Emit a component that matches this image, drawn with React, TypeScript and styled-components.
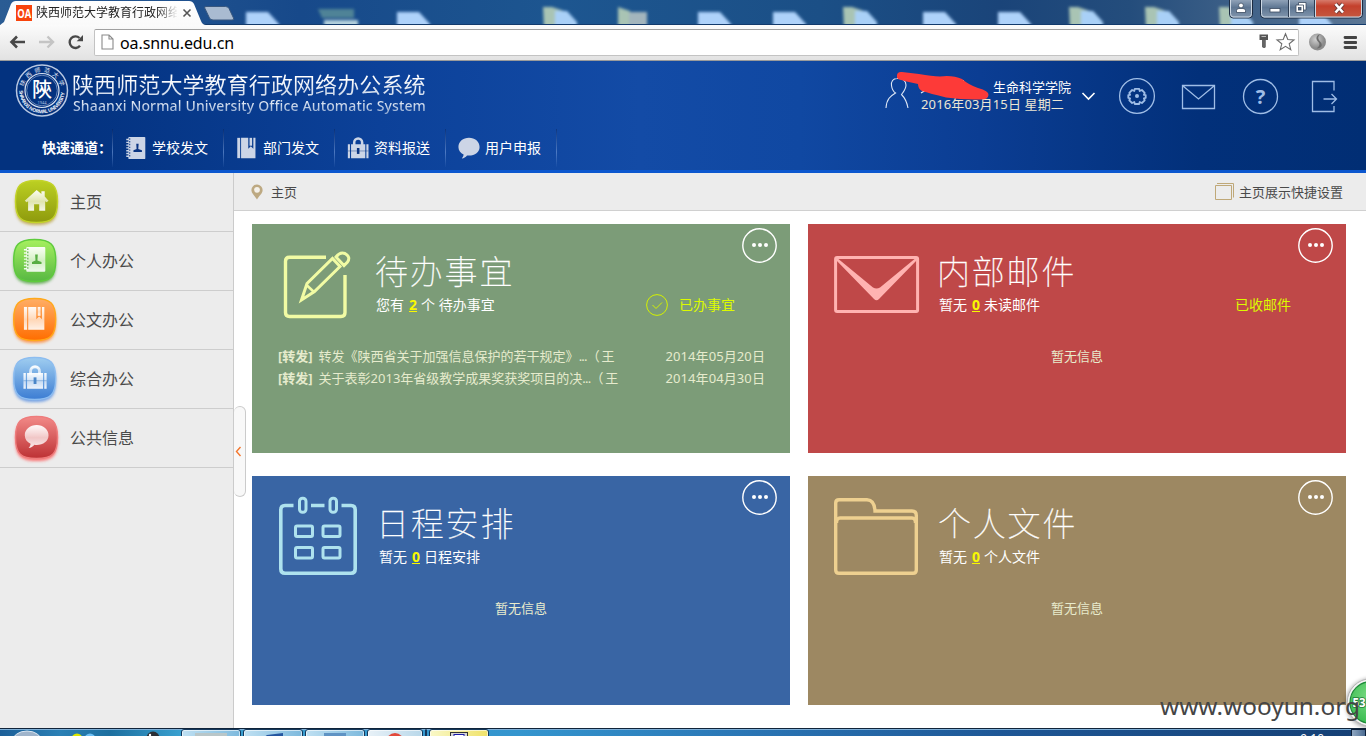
import React from "react";
import styled, { createGlobalStyle } from "styled-components";

const Global = createGlobalStyle`
  * { box-sizing: border-box; }
  body { margin: 0; overflow: hidden; background: #fff; }
  body, button { font-family: "Noto Sans", "Noto Sans CJK SC", sans-serif; }
  svg { display: block; flex: none; }
`;

const Screen = styled.div`
  position: relative;
  display: flex;
  flex-direction: column;
  width: 1366px;
  height: 736px;
  overflow: hidden;
`;

/* ---------- browser chrome ---------- */

const TabStrip = styled.div`
  position: relative;
  height: 25px;
  flex: none;
  background: linear-gradient(90deg, #2a5c94 0, #17498a 300px, #1d5690 560px, #1b4f86 820px, #1a4479 1000px, #244d7c 1130px, #5c7795 1366px);
`;

const Wallpaper = styled.svg`
  position: absolute;
  left: 0;
  top: 0;
`;

const TabLabel = styled.div`
  position: absolute;
  left: 36px;
  top: 3px;
  width: 141px;
  overflow: hidden;
  white-space: nowrap;
  font-size: 12px;
  line-height: 20px;
  color: #222;
  -webkit-mask-image: linear-gradient(90deg, #000 120px, transparent 142px);
  mask-image: linear-gradient(90deg, #000 120px, transparent 142px);
`;

const Toolbar = styled.div`
  display: flex;
  align-items: center;
  height: 36px;
  flex: none;
  padding: 0 9px 1px 7px;
  background: linear-gradient(#fbfbfb, #e2e2e2);
  border-bottom: 1px solid #9b9b9b;
`;

const AddressBar = styled.div`
  display: flex;
  align-items: center;
  width: 1206px;
  height: 27px;
  margin: 0 9px 0 10px;
  padding: 0 2px 0 6px;
  border: 1px solid #c3c3c3;
  border-top-color: #a0a0a0;
  border-radius: 2px;
  background: #fff;
`;

const Url = styled.span`
  flex: 1;
  margin-left: 6px;
  padding-top: 2px;
  font-size: 16px;
  line-height: 20px;
  letter-spacing: -0.08px;
  color: #000;
`;

/* ---------- site header ---------- */

const Header = styled.header`
  display: flex;
  flex-direction: column;
  height: 112px;
  flex: none;
  border-bottom: 3px solid #0b57cf;
  background: linear-gradient(90deg, #03327f 0, #03327f 60px, #0c4199 380px, #134ba6 640px, #1048a2 800px, #0b3d93 980px, #02307a 1200px, #012e74 1366px);
`;

const HeaderTop = styled.div`
  display: flex;
  align-items: flex-start;
  height: 67px;
  padding-left: 15px;
`;

const SiteName = styled.div`
  width: 374px;
  flex: none;
  margin-left: 3px;
  padding-top: 10px;
  white-space: nowrap;
`;

const SiteNameCn = styled.div`
  font-size: 22px;
  line-height: 26px;
  letter-spacing: 0.1px;
  background: linear-gradient(#fff 30%, #c9d6ea);
  background-clip: text;
  -webkit-background-clip: text;
  color: transparent;
`;

const SiteNameEn = styled.div`
  padding-left: 1px;
  font-family: "Noto Sans", sans-serif;
  font-size: 14px;
  font-weight: 500;
  line-height: 18px;
  letter-spacing: 0.14px;
  background: linear-gradient(#e0e8f4 30%, #7f9cc9);
  background-clip: text;
  -webkit-background-clip: text;
  color: transparent;
`;

const UserTools = styled.div`
  position: relative;
  display: flex;
  flex: none;
  margin-left: 439px;
`;

const UserText = styled.div`
  width: 157px;
  margin-left: 11px;
  padding-top: 18px;
  white-space: nowrap;
  font-size: 13px;
  line-height: 17px;
  color: #fff;
`;

const Department = styled.div`
  padding-left: 72px;
`;

const DateText = styled.div`
  color: #ece6d4;
  letter-spacing: 0.14px;
`;

const Scribble = styled.svg`
  position: absolute;
  left: 5px;
  top: 8px;
`;

const QuickNav = styled.nav`
  display: flex;
  align-items: center;
  height: 42px;
  padding: 0 0 3px 42px;
  font-size: 14px;
  line-height: 20px;
  color: #fff;
`;

const QuickLabel = styled.span`
  width: 70px;
  white-space: nowrap;
  font-weight: 700;
  word-spacing: -1px;
`;

const QuickItem = styled.div`
  display: flex;
  align-items: center;
  width: 111px;
  height: 38px;
  padding-left: 12px;
  gap: 5px;
  border-left: 1px solid;
  border-image: linear-gradient(rgba(0, 20, 70, 0.4), rgba(110, 150, 215, 0.65) 60%, rgba(110, 150, 215, 0)) 1;
`;

const QuickEnd = styled(QuickItem)`
  width: 1px;
  padding: 0;
`;

/* ---------- body ---------- */

const Body = styled.div`
  display: flex;
  flex: 1;
  min-height: 0;
`;

const Sidebar = styled.aside`
  width: 234px;
  background: #ececec;
  border-right: 1px solid #cbcbcb;
`;

const MenuRow = styled.div`
  display: flex;
  align-items: center;
  height: 59px;
  border-bottom: 1px solid #cdcdcd;
  font-size: 16px;
  line-height: 24px;
  color: #4a4a4a;
`;

const MenuIcon = styled.svg`
  margin-right: 6px;
`;

const Main = styled.main`
  position: relative;
  flex: 1;
  background: #fff;
`;

const Crumbs = styled.div`
  display: flex;
  align-items: center;
  height: 38px;
  padding: 0 23px 0 17px;
  background: #ececec;
  border-bottom: 1px solid #d0d0d0;
  font-size: 13px;
  line-height: 20px;
  color: #4a4a4a;
`;

const CrumbName = styled.span`
  flex: 1;
  margin-left: 8px;
`;

const SettingText = styled.span`
  margin-left: 5px;
`;

const CollapseHandle = styled.div`
  position: absolute;
  left: 0;
  top: 233px;
  display: flex;
  align-items: center;
  padding-left: 1px;
  width: 12px;
  height: 91px;
  border: 1px solid #cbcbcb;
  border-left: 0;
  border-radius: 6px;
  background: #f8f8f8;
`;

const CardGrid = styled.div`
  display: grid;
  grid-template-columns: 538px 538px;
  grid-auto-rows: 229px;
  gap: 23px 18px;
  padding: 13px 0 0 18px;
`;

const Card = styled.section<{ $bg: string }>`
  position: relative;
  background: ${(p) => p.$bg};
`;

const CardHead = styled.div`
  display: flex;
  height: 121px;
`;

const CardTitles = styled.div<{ $shift: number }>`
  flex: 1;
  padding: 24px 55px 0 ${(p) => p.$shift}px;
  white-space: nowrap;
`;

const CardTitle = styled.h2<{ $indent: number }>`
  margin: 0 0 2px;
  text-indent: ${(p) => p.$indent}px;
  font-family: "Noto Sans CJK SC", sans-serif;
  font-size: 33px;
  font-weight: 100;
  line-height: 44px;
  letter-spacing: 1.8px;
  color: #fff;
  -webkit-text-stroke: 0.3px #fff;
`;

const CardSub = styled.div`
  display: flex;
  align-items: center;
  height: 22px;
  font-size: 14px;
  line-height: 22px;
  color: #fff;
`;

const Count = styled.b`
  margin: 0 4px 0 5px;
  color: #f8f800;
  text-decoration: underline;
`;

const CardLink = styled.div`
  display: flex;
  align-items: center;
  gap: 11px;
  margin-left: auto;
  color: #dcfa00;
`;

const MoreButton = styled.div`
  position: absolute;
  right: 13px;
  top: 4px;
`;

const ItemList = styled.div`
  font-size: 13px;
  line-height: 22px;
  color: #e6ebcd;
  padding: 0 25px 0 26px;
`;

const Item = styled.div`
  display: flex;
  justify-content: space-between;
  white-space: nowrap;
`;

const Tag = styled.b`
  margin-right: 6px;
`;

const Sender = styled.span`
  letter-spacing: -0.8px;
`;

const DateCell = styled.span`
  letter-spacing: 0.1px;
`;

const Empty = styled.div`
  text-align: center;
  font-size: 13px;
  line-height: 22px;
  color: #e8ebcd;
`;

/* ---------- desktop overlays and taskbar ---------- */

const Watermark = styled.div`
  position: absolute;
  left: 1160px;
  top: 689px;
  font-family: "Noto Sans", sans-serif;
  font-size: 24.4px;
  line-height: 34px;
  color: #454545;
  white-space: nowrap;
`;

const SpeedBall = styled.svg`
  position: absolute;
  left: 1336px;
  top: 672px;
`;

const Taskbar = styled.div`
  display: flex;
  height: 8px;
  flex: none;
  overflow: hidden;
  border-top: 1px solid #10243a;
  box-shadow: inset 0 1px 0 #7fb0d8;
  background: linear-gradient(90deg, #1c5f98 0, #2b80b5 60px, #1d6f9f 110px, #39a0cf 180px, #3495ce 520px, #2a75b4 750px, #1e5796 1000px, #153f74 1366px);
`;

const TaskStart = styled.div`
  width: 181px;
  flex: none;
`;

const TaskButton = styled.div<{ $w: number; $bg: string }>`
  display: flex;
  justify-content: center;
  width: ${(p) => p.$w}px;
  height: 12px;
  flex: none;
  margin-right: 2px;
  border: 1px solid #14385c;
  border-radius: 3px;
  box-shadow: inset 0 0 0 1px rgba(255, 255, 255, 0.6);
  background: ${(p) => p.$bg};
`;

const Clock = styled.div`
  margin: 4px 27px 0 auto;
  font-size: 12px;
  line-height: 12px;
  color: #fff;
`;

const ShowDesktop = styled.div`
  width: 15px;
  height: 12px;
  border: 1px solid #0b1f3a;
  background: linear-gradient(90deg, #8fa7c2, #4c6c92);
`;

type GlyphKind = "home" | "book" | "mark" | "case" | "chat";

/* Symbols are drawn on a 26 x 26 field */
function Glyph({ kind, fill, dark }: { kind: GlyphKind; fill: string; dark: string }) {
  switch (kind) {
    case "home":
      return (
        <path
          fill={fill}
          d="M13 2 L18 6.2 V3.5 H21.5 V9 L25.5 13.4 L23.5 15 L22 14 V24 H15.7 V17 H10.3 V24 H4 V14 L2.5 15 L0.5 13.4 Z"
        />
      );
    case "book":
      return (
        <g>
          <rect x="4" y="0" width="20" height="26" rx="1" fill={fill} />
          <path d="M1.500 3h4M1.500 6.300h4M1.500 9.600h4M1.500 12.900h4M1.500 16.200h4M1.500 19.500h4M1.500 22.800h4" stroke={fill} strokeWidth="1.6" />
          <path d="M5.600 1.500v23" stroke={dark} strokeWidth="1.2" strokeDasharray="1.65 1.65" />
          <path d="M13.300 8h2.800l-.4 6.300 4.300 1.400V17.800h-10v-2.100l3.700-1.400z" fill={dark} />
        </g>
      );
    case "mark":
      return (
        <g fill={fill}>
          <rect x="1.500" y="1" width="3.4" height="24" />
          <path d="M6 1h8.500v13l3-3 3 3V1H23v24H6z" />
          <rect x="16" y="1" width="3" height="9.3" />
        </g>
      );
    case "case":
      return (
        <g>
          <path d="M8.500 10V6.500a4.700 4.700 0 0 1 9.400 0v3.500" fill="none" stroke={fill} strokeWidth="3" />
          <path d="M1 8.500H3.500V25H1zM4.800 8.500h16.800V25H4.800zM22.900 8.500h2.500V25h-2.500z" fill={fill} />
          <path d="M1 16.500h24.500" stroke={dark} strokeWidth=".9" opacity=".55" />
          <rect x="11.700" y="13" width="3" height="7" fill={dark} />
        </g>
      );
    default:
      return (
        <path
          fill={fill}
          d="M13 1C20 1 25.500 5.500 25.500 11.800S20 22 13 22c-1 0-1.600 0-2.300-.2C9 23.800 7 25 4.500 25.300c1-1 2-2.500 2.100-4.500C3 19 .5 16 .5 11.800.5 5.500 6 1 13 1z"
        />
      );
  }
}

const quickLinks: { kind: GlyphKind; text: string }[] = [
  { kind: "book", text: "学校发文" },
  { kind: "mark", text: "部门发文" },
  { kind: "case", text: "资料报送" },
  { kind: "chat", text: "用户申报" },
];

const menu: { kind: GlyphKind; text: string; x: number; top: string; bottom: string; edge: string; dark: string; glow: string }[] = [
  { kind: "home", text: "主页", x: 15.5, top: "#bcd022", bottom: "#8e9a0d", edge: "#c3d32a", dark: "#8e9a0d", glow: "#b59a2a" },
  { kind: "book", text: "个人办公", x: 13.7, top: "#a6f05f", bottom: "#57b842", edge: "#5ecb3c", dark: "#57ad42", glow: "#3f9d2c" },
  { kind: "mark", text: "公文办公", x: 13.7, top: "#ffae66", bottom: "#ff6d00", edge: "#ffa91a", dark: "#e8761c", glow: "#ff7b1c" },
  { kind: "case", text: "综合办公", x: 13.7, top: "#9fcdf0", bottom: "#3c7dd3", edge: "#8dbdf0", dark: "#4a86c8", glow: "#4a86e0" },
  { kind: "chat", text: "公共信息", x: 15.5, top: "#f28a88", bottom: "#bd3134", edge: "#ee7c7c", dark: "#bd3134", glow: "#ff4b4b" },
];

function MenuBadge({ item }: { item: (typeof menu)[number] }) {
  const { kind, x } = item;
  const body = "M21 0 C37 0 42 5 42 21 S37 42 21 42 0 37 0 21 5 0 21 0Z";
  return (
    <MenuIcon width="64" height="58" viewBox="0 0 64 58">
      <defs>
        <linearGradient id={`bg-${kind}`} x2="0" y2="1">
          <stop offset="0" stopColor={item.top} />
          <stop offset="1" stopColor={item.bottom} />
        </linearGradient>
        <linearGradient id={`fg-${kind}`} x2="0" y2="1">
          <stop offset="0" stopColor="#fff" stopOpacity=".95" />
          <stop offset=".55" stopColor="#fff" stopOpacity=".65" />
          <stop offset="1" stopColor="#fff" stopOpacity=".9" />
        </linearGradient>
        <filter id={`sh-${kind}`} x="-20%" y="-20%" width="140%" height="150%">
          <feGaussianBlur stdDeviation="1.7" />
        </filter>
      </defs>
      <path d={body} transform={`translate(${x} 10)`} fill={item.glow} opacity=".75" filter={`url(#sh-${kind})`} />
      <path d={body} transform={`translate(${x} 7.500)`} fill={`url(#bg-${kind})`} stroke={item.edge} strokeWidth="1.4" />
      <g transform={`translate(${x + 8.8} 15) scale(.95)`}>
        <Glyph kind={kind} fill={`url(#fg-${kind})`} dark={item.dark} />
      </g>
    </MenuIcon>
  );
}

const wallpaperIcons: { x: number; kind: "doc" | "sheet" | "device" }[] = [
  { x: 245, kind: "doc" },
  { x: 318, kind: "device" },
  { x: 396, kind: "doc" },
  { x: 543, kind: "sheet" },
  { x: 618, kind: "device" },
  { x: 697, kind: "doc" },
  { x: 772, kind: "doc" },
  { x: 843, kind: "sheet" },
  { x: 922, kind: "doc" },
  { x: 997, kind: "doc" },
  { x: 1069, kind: "sheet" },
  { x: 1145, kind: "sheet" },
  { x: 1219, kind: "sheet" },
  { x: 1298, kind: "doc" },
];

function WindowStrip() {
  return (
    <TabStrip>
      <Wallpaper width="1366" height="25" viewBox="0 0 1366 25">
        <defs>
          <filter id="soft" x="-20%" y="-20%" width="140%" height="140%">
            <feGaussianBlur stdDeviation="1.8" />
          </filter>
          <linearGradient id="btn" x2="0" y2="1">
            <stop offset="0" stopColor="#a3b3c6" />
            <stop offset=".5" stopColor="#5f7793" />
            <stop offset="1" stopColor="#8296ad" />
          </linearGradient>
          <linearGradient id="close" x2="0" y2="1">
            <stop offset="0" stopColor="#e0988a" />
            <stop offset=".45" stopColor="#c4402c" />
            <stop offset="1" stopColor="#c4573f" />
          </linearGradient>
          <linearGradient id="tab" x2="0" y2="1">
            <stop offset="0" stopColor="#fff" />
            <stop offset="1" stopColor="#fafafa" />
          </linearGradient>
        </defs>
        <g filter="url(#soft)">
          {wallpaperIcons.map(({ x, kind }) =>
            kind === "doc" ? (
              <path key={x} d={`M${x + 1} 12h22l11 12v4H${x + 1}z`} fill="#aed2fa" />
            ) : kind === "sheet" ? (
              <g key={x}>
                <path d={`M${x} 7h9l12 4v18H${x + 1}z`} fill="#a9c4b4" />
                <path d={`M${x + 12} 11h12l10 11v7H${x + 12}z`} fill="#a9d0f7" />
              </g>
            ) : x < 500 ? (
              <g key={x}>
                <path d={`M${x} 9h36v9H${x + 4}z`} fill="#4f8397" />
                <path d={`M${x + 6} 20h34v9H${x + 6}z`} fill="#b3d0dc" />
              </g>
            ) : (
              <g key={x}>
                <path d={`M${x} 7l12 4v18H${x}z`} fill="#a9c4b4" />
                <path d={`M${x + 11} 12h18v17H${x + 11}z`} fill="#a3b5bd" />
              </g>
            ),
          )}
        </g>
        <path d="M0 24.500h1366" stroke="#123a6c" />
        <path d="M0 25 L4 22 11 4Q12.500 1 16 1H189Q192.500 1 194 4L201 21Q202.500 25 206 25Z" fill="url(#tab)" />
        <path d="M206 6.500Q204 6.500 204.700 8L209.500 18Q210.500 20 213 20H232Q234.500 20 233.500 18L229 8.500Q228 6.500 225.500 6.500Z" fill="#a9bbd1" stroke="#38577e" strokeWidth="1" />
        <rect x="16" y="5" width="16" height="16" fill="#f8440c" />
        <text x="17.200" y="17.600" fill="#fff" fontSize="12.500" fontWeight="700" fontFamily="Open Sans, sans-serif" textLength="14" lengthAdjust="spacingAndGlyphs">OA</text>
        <path d="M183.500 9.500l7 7m0-7l-7 7" stroke="#555" strokeWidth="1.600" />
        <path d="M1229.500 -3V14Q1229.500 18 1233 18H1249Q1252.500 18 1252.500 14V-3Z" fill="url(#btn)" stroke="#1c2c42" />
        <path d="M1230.500 -3V13.500Q1230.500 17 1233 17H1249Q1251.500 17 1251.500 13.500V-3" fill="none" stroke="#cdd8e4" />
        <path d="M1260.500 -3V14Q1260.500 18 1264 18H1359Q1362.500 18 1362.500 14V-3Z" fill="url(#btn)" stroke="#1c2c42" />
        <path d="M1315 -3H1361.500V13.500Q1361.500 17 1359 17H1315Z" fill="url(#close)" />
        <path d="M1261.500 -3V13.500Q1261.500 17 1264 17H1359Q1361.500 17 1361.500 13.500V-3M1289.500 0V17M1315.500 0V17" fill="none" stroke="#cdd8e4" />
        <path d="M1288.500 0V17M1314.500 0V17" stroke="#2c3c52" />
        <g fill="#fff" stroke="#3a4a60" strokeWidth=".8">
          <circle cx="1241" cy="5.500" r="2.400" />
          <path d="M1236.500 12.500V10.500Q1236.500 8.500 1239 8.500H1243Q1245.500 8.500 1245.500 10.500V12.500Z" />
          <rect x="1270" y="8.500" width="10" height="3.500" />
          <path d="M1298.500 2.500H1306V10H1298.500Z" />
          <path d="M1296 5H1303.500V12.500H1296Z" />
          <rect x="1298.500" y="7.500" width="2.500" height="2.500" fill="#4d6582" />
        </g>
        <path d="M1335.500 4l7.500 8.500m0-8.500l-7.500 8.500" stroke="#6e3a36" strokeWidth="4.200" />
        <path d="M1335.500 4l7.500 8.500m0-8.500l-7.500 8.500" stroke="#fff" strokeWidth="2.600" />
      </Wallpaper>
      <TabLabel>陕西师范大学教育行政网络</TabLabel>
    </TabStrip>
  );
}

function BrowserToolbar() {
  return (
    <Toolbar>
      <svg width="77" height="26" viewBox="7 29.500 77 26">
        <path d="M25 42.500H12M17 37L11.500 42.500 17 48" fill="none" stroke="#484848" strokeWidth="2.600" />
        <path d="M39 42.500H52M47.500 37L53 42.500 47.500 48" fill="none" stroke="#c4c4c4" strokeWidth="2.400" />
        <path d="M80 46.300A5.800 5.800 0 1 1 79.500 38.500" fill="none" stroke="#484848" strokeWidth="2.400" />
        <path d="M83 35.500V41.800H76.700Z" fill="#484848" />
      </svg>
      <AddressBar>
        <svg width="13" height="16" viewBox="0 0 13 16">
          <path d="M1 1H8L12 5V15H1ZM8 1V5H12" fill="#fff" stroke="#8a8a8a" strokeWidth="1.100" />
        </svg>
        <Url>oa.snnu.edu.cn</Url>
        <svg width="38" height="20" viewBox="0 0 38 20">
          <path d="M1.500 2.500h8.500v5.500H1.500z" fill="#555" />
          <path d="M3.500 4.500h4.500" stroke="#bbb" />
          <path d="M4 8h3.800v7l-1 1H5.500l-1.500-1z" fill="#666" />
          <path d="M27.500 1.800l2.300 5.700 6.200.4-4.800 3.900 1.600 6-5.300-3.400-5.300 3.400 1.600-6L19 7.900l6.200-.4z" fill="#fff" stroke="#6c6c6c" strokeWidth="1.100" />
        </svg>
      </AddressBar>
      <svg width="49" height="22" viewBox="0 0 49 22">
        <defs>
          <radialGradient id="globe" cx=".4" cy=".35">
            <stop offset="0" stopColor="#cfcfcf" />
            <stop offset="1" stopColor="#8c8c8c" />
          </radialGradient>
        </defs>
        <circle cx="9.500" cy="11" r="8.500" fill="url(#globe)" />
        <path d="M12 3C8 4.500 7.500 8 10 10.500s1.500 5-1.500 7c5.500-.5 6.500-3.500 4-6.500s-3-4.500-.5-8z" fill="#6c6c6c" />
        <path d="M37 6.500h11M37 11.500h11M37 16.500h11" stroke="#444" strokeWidth="2.800" strokeLinecap="round" />
      </svg>
    </Toolbar>
  );
}

function Seal() {
  return (
    <svg width="54" height="60" viewBox="15 61 54 60">
      <defs>
        <path id="ring-low" d="M19.200 90.500a22.800 22.800 0 0 0 45.600 0" />
        <path id="ring-up" d="M23.500 90.500a18.500 18.500 0 0 1 37 0" />
      </defs>
      <circle cx="42" cy="90.500" r="25.500" fill="none" stroke="#b9c8e2" strokeWidth="1.500" />
      <circle cx="42" cy="90.500" r="17" fill="none" stroke="#d8e1f0" strokeWidth="1.200" />
      <circle cx="42" cy="90.500" r="15.300" fill="none" stroke="#8fa8d0" strokeWidth=".7" />
      <text fill="#e8eef8" fontSize="5" fontWeight="700" fontFamily="Noto Sans, sans-serif">
        <textPath href="#ring-low" textLength="69">SHAANXI NORMAL UNIVERSITY</textPath>
      </text>
      <text fill="#e8eef8" fontSize="6" fontFamily="Noto Sans CJK SC, sans-serif">
        <textPath href="#ring-up" textLength="50" startOffset="4">陕西师范大学</textPath>
      </text>
      <text x="42" y="97" textAnchor="middle" fill="#fff" fontSize="20" fontWeight="500" fontFamily="Noto Sans CJK SC, sans-serif">陝</text>
      <text x="42" y="104" textAnchor="middle" fill="#b9c8e2" fontSize="4" fontFamily="Noto Sans, sans-serif">1944</text>
    </svg>
  );
}

function HeaderIcons() {
  return (
    <svg width="288" height="60" viewBox="1078 61 288 60" fill="none" stroke="#9fbde6" strokeWidth="1.300">
      <path d="M1082.500 93L1088.500 99 1094.500 93" stroke="#fff" strokeWidth="1.600" />
      <circle cx="1137" cy="96" r="17.400" />
      <path d="M1134.800 88.800h4.400l.5 2.200 2.200-1 2.800 2.800-.8 2 1.800.3v2.800l-1.800.4.8 2-2.800 2.700-2.200-1-.5 2h-4.400l-.5-2-2.200 1-2.800-2.700.8-2-1.800-.4v-2.800l1.800-.3-.8-2 2.800-2.800 2.200 1z" strokeWidth="1.800" strokeLinejoin="round" />
      <circle cx="1137" cy="96" r="2" fill="#9fbde6" stroke="none" />
      <path d="M1182.500 85.500H1214.500V108.500H1182.500ZM1183 86L1198.500 99 1214 86" />
      <circle cx="1260.500" cy="96.500" r="17" />
      <text x="1260.500" y="104" textAnchor="middle" fill="#9fbde6" stroke="none" fontSize="20" fontWeight="700" fontFamily="Noto Sans, sans-serif">?</text>
      <path d="M1334 90.500V81.500H1312.500V111.500H1334V106M1323.500 99H1336.500M1331.500 94L1336.500 99 1331.500 104" />
    </svg>
  );
}

function MoreDots() {
  return (
    <MoreButton>
      <svg width="35" height="35" viewBox="0 0 35 35">
        <circle cx="17.500" cy="17.500" r="16.700" fill="none" stroke="#fff" strokeWidth="1.400" />
        <g fill="#fff">
          <circle cx="12" cy="17" r="2" />
          <circle cx="18" cy="17" r="2" />
          <circle cx="24" cy="17" r="2" />
        </g>
      </svg>
    </MoreButton>
  );
}

const PencilArt = () => (
  <g fill="none" stroke="#f1fba4" strokeWidth="3.400">
    <path d="M74 33.300H37.500Q33.500 33.300 33.500 37.300V88.500Q33.500 92.500 37.500 92.500H89Q93 92.500 93 88.500V51" />
    <path d="M49.500 76L55 59.500 80.500 34.500 88 42.500 62.500 67.500Z" strokeWidth="3" />
    <path d="M54 60.500L62.500 68.500" strokeWidth="2.500" />
    <path d="M84 33Q88 27.500 93 29.500 99 33 95.500 38L92 41.500Z" strokeWidth="3" />
  </g>
);

const EnvelopeArt = () => (
  <g>
    <rect x="27.600" y="33.600" width="82" height="54" rx="1.500" fill="none" stroke="#ffb3b1" strokeWidth="3" />
    <path d="M28 33L65 63.500Q68.500 65.500 72 63.500L109 33V36L71 75Q68.500 77.500 66 75L28 36Z" fill="#ffb3b1" />
  </g>
);

const CalendarArt = () => (
  <g fill="none" stroke="#aee2ee" strokeWidth="3.600">
    <path d="M41.500 29.500H33Q28.800 29.500 28.800 34V93Q28.800 97.200 33 97.200H99Q103.200 97.200 103.200 93V34Q103.200 29.500 99 29.500H89.500M59 29.500H72.500" />
    <rect x="47.500" y="22.200" width="6.500" height="14" rx="3" strokeWidth="3" />
    <rect x="78" y="22.200" width="6.500" height="14" rx="3" strokeWidth="3" />
    <rect x="43.500" y="50" width="17" height="10.500" rx="1.500" strokeWidth="3" />
    <rect x="71" y="50" width="17" height="10.500" rx="1.500" strokeWidth="3" />
    <rect x="43.500" y="71.500" width="17" height="10.500" rx="1.500" strokeWidth="3" />
    <rect x="71" y="71.500" width="17" height="10.500" rx="1.500" strokeWidth="3" />
  </g>
);

const FolderArt = () => (
  <g fill="none" stroke="#eed090" strokeWidth="3.400">
    <path d="M27.700 94V27Q27.700 23.700 31 23.700H59Q66.500 24 67 35H104Q108.300 35 108.300 39.500V94Q108.300 97.300 105 97.300H31Q27.700 97.300 27.700 94Z" />
    <path d="M28.500 47Q28.500 42 32 42H104Q107.500 42 107.500 47" />
  </g>
);

interface CardData {
  bg: string;
  title: string;
  art: React.ReactNode;
  shift: number;
  indent: number;
  before: string;
  count: number;
  after: string;
  link?: string;
  check?: boolean;
  items?: { text: string; sender: string; date: string }[];
}

const cards: CardData[] = [
  {
    bg: "#7c9c78",
    title: "待办事宜",
    art: <PencilArt />,
    shift: 0,
    indent: -1,
    before: "您有",
    count: 2,
    after: "个 待办事宜",
    link: "已办事宜",
    check: true,
    items: [
      { text: "转发《陕西省关于加强信息保护的若干规定》", sender: "...（ 王", date: "2014年05月20日" },
      { text: "关于表彰2013年省级教学成果奖获奖项目的决", sender: "...（ 王", date: "2014年04月30日" },
    ],
  },
  { bg: "#bf4848", title: "内部邮件", art: <EnvelopeArt />, shift: 7, indent: -2, before: "暂无", count: 0, after: "未读邮件", link: "已收邮件" },
  { bg: "#3965a4", title: "日程安排", art: <CalendarArt />, shift: 3, indent: -3, before: "暂无", count: 0, after: "日程安排" },
  { bg: "#9d8862", title: "个人文件", art: <FolderArt />, shift: 7, indent: -1, before: "暂无", count: 0, after: "个人文件" },
];

function DashboardCard({ card }: { card: CardData }) {
  return (
    <Card $bg={card.bg}>
      <CardHead>
        <svg width="124" height="121" viewBox="0 0 124 121">{card.art}</svg>
        <CardTitles $shift={card.shift}>
          <CardTitle $indent={card.indent}>{card.title}</CardTitle>
          <CardSub>
            <span>{card.before}</span>
            <Count>{card.count}</Count>
            <span>{card.after}</span>
            {card.link && (
              <CardLink>
                {card.check && (
                  <svg width="22" height="22" viewBox="0 0 22 22" fill="none" stroke="#d4f200">
                    <circle cx="11" cy="11" r="10.400" />
                    <path d="M6.500 11l3.500 3.500 6-6" />
                  </svg>
                )}
                <span>{card.link}</span>
              </CardLink>
            )}
          </CardSub>
        </CardTitles>
      </CardHead>
      {card.items ? (
        <ItemList>
          {card.items.map((item) => (
            <Item key={item.date}>
              <span>
                <Tag>[转发]</Tag>
                {item.text}
                <Sender>{item.sender}</Sender>
              </span>
              <DateCell>{item.date}</DateCell>
            </Item>
          ))}
        </ItemList>
      ) : (
        <Empty>暂无信息</Empty>
      )}
      <MoreDots />
    </Card>
  );
}

const blueTask = "linear-gradient(90deg, #bfe0f2, #7db9dd)";

export default function App() {
  return (
    <Screen>
      <Global />
      <WindowStrip />
      <BrowserToolbar />
      <Header>
        <HeaderTop>
          <Seal />
          <SiteName>
            <SiteNameCn>陕西师范大学教育行政网络办公系统</SiteNameCn>
            <SiteNameEn>Shaanxi Normal University Office Automatic System</SiteNameEn>
          </SiteName>
          <UserTools>
            <svg width="25" height="60" viewBox="885 61 25 60" fill="none" stroke="#dfe8f6" strokeWidth="1.100">
              <path d="M897 78.500c-4 0-6 3-5.500 7 .5 4 2.500 6.500 4 7.500-5 3-9 6-9.500 15M897 78.500c5-.5 9 2 9 6.500 0 4-2.500 7-4.500 9.500 3 3 5 5.500 6.500 13.500" />
            </svg>
            <UserText>
              <Department>生命科学学院</Department>
              <DateText>2016年03月15日 星期二</DateText>
            </UserText>
            <HeaderIcons />
            <Scribble width="104" height="36" viewBox="890 69 104 36">
              <path d="M921 93l5-3M930 90h4" stroke="#e8eef8" strokeWidth="1.300" />
              <path d="M960 80h4v3h-4z" fill="#fff" />
              <path d="M897 75.500Q897 71.500 902 72L919 74Q932 76 940 76.500 953 75 962 79 969 85 978 88 989 91 988.500 95 988 100 980 99.500 963 100 946 97.500 930 93.500 922 91 918 89 918 84 903 81 898 79Q896.500 77.500 897 75.500Z" fill="#fd3a38" />
            </Scribble>
          </UserTools>
        </HeaderTop>
        <QuickNav>
          <QuickLabel>快速通道：</QuickLabel>
          {quickLinks.map(({ kind, text }) => (
            <QuickItem key={kind}>
              <svg width="22" height="22" viewBox="0 0 26 26">
                <Glyph kind={kind} fill="#ccd5e6" dark="#0b3582" />
              </svg>
              <span>{text}</span>
            </QuickItem>
          ))}
          <QuickEnd />
        </QuickNav>
      </Header>
      <Body>
        <Sidebar>
          {menu.map((item) => (
            <MenuRow key={item.kind}>
              <MenuBadge item={item} />
              {item.text}
            </MenuRow>
          ))}
        </Sidebar>
        <Main>
          <Crumbs>
            <svg width="12" height="16" viewBox="0 0 12 16">
              <path d="M6 .5a5.600 5.600 0 0 1 5.600 5.800C11.600 9.500 8 12 6 15.500 4 12 .4 9.500.4 6.300A5.600 5.600 0 0 1 6 .5z" fill="#bda982" />
              <circle cx="6" cy="5.800" r="2.900" fill="#f4f1ea" />
            </svg>
            <CrumbName>主页</CrumbName>
            <svg width="19" height="17" viewBox="0 0 19 17" fill="none" stroke="#bfa878">
              <path d="M.5 2.500H16.500V16.500H.5ZM2 .5H18.500V14.500" />
            </svg>
            <SettingText>主页展示快捷设置</SettingText>
          </Crumbs>
          <CardGrid>
            {cards.map((card) => (
              <DashboardCard key={card.title} card={card} />
            ))}
          </CardGrid>
          <CollapseHandle>
            <svg width="7" height="11" viewBox="0 0 7 11">
              <path d="M5.500 1L1.500 5.500 5.500 10" fill="none" stroke="#f4762c" strokeWidth="1.400" />
            </svg>
          </CollapseHandle>
        </Main>
      </Body>
      <Taskbar>
        <TaskStart>
          <svg width="181" height="7" viewBox="0 0 181 7">
            <ellipse cx="27" cy="13" rx="15" ry="11" fill="#9fb4cb" stroke="#d9e6f2" />
            <circle cx="77" cy="10" r="5.500" fill="#dbe600" />
            <circle cx="90" cy="10" r="5.500" fill="#6cc0f5" />
            <circle cx="153" cy="9" r="6.500" fill="#2a2f35" />
            <circle cx="150" cy="6" r="1.200" fill="#fff" />
          </svg>
        </TaskStart>
        <TaskButton $w={60} $bg={blueTask}>
          <svg width="32" height="10"><rect y="3" width="32" height="7" fill="#b9c6c8" /></svg>
        </TaskButton>
        <TaskButton $w={60} $bg={blueTask}>
          <svg width="20" height="10"><path d="M0 8L4 5 20 3V10H0Z" fill="#2456a0" /></svg>
        </TaskButton>
        <TaskButton $w={60} $bg={blueTask}>
          <svg width="22" height="10"><rect y="3" width="22" height="7" fill="#5f93c4" /></svg>
        </TaskButton>
        <TaskButton $w={56} $bg="linear-gradient(90deg, #e8f1f7, #b9d8ea)">
          <svg width="20" height="10"><circle cx="10" cy="12" r="9" fill="#e2493c" /></svg>
        </TaskButton>
        <TaskButton $w={2} $bg="#8fc4e2" />
        <TaskButton $w={60} $bg="linear-gradient(90deg, #f9f8c8, #f0e268)">
          <svg width="18" height="10">
            <rect x=".5" y="2.500" width="17" height="9" fill="#d6d6d6" stroke="#333" />
            <rect x="4" y="4.500" width="10" height="6" fill="#fff" stroke="#1a1aa8" />
          </svg>
        </TaskButton>
        <Clock>9:10</Clock>
        <ShowDesktop />
      </Taskbar>
      <SpeedBall width="30" height="60" viewBox="1336 672 30 60">
        <defs>
          <radialGradient id="ball" cx=".5" cy=".35" r=".6">
            <stop offset="0" stopColor="#7ddc85" />
            <stop offset="1" stopColor="#3fbe55" />
          </radialGradient>
          <filter id="ball-shadow" x="-20%" y="-20%" width="140%" height="140%">
            <feGaussianBlur stdDeviation="2" />
          </filter>
        </defs>
        <circle cx="1371" cy="703.500" r="25" fill="#000" opacity=".35" filter="url(#ball-shadow)" />
        <circle cx="1371" cy="702.500" r="23.800" fill="#f4f4f4" stroke="#b4b4b4" />
        <circle cx="1371" cy="702.500" r="21" fill="url(#ball)" stroke="#1f8a3a" strokeWidth="1.200" />
        <text x="1352.500" y="706.500" fill="#fff" stroke="#227a38" strokeWidth="1.600" paintOrder="stroke" fontSize="11.500" fontWeight="700" fontFamily="Noto Sans, sans-serif">53</text>
      </SpeedBall>
      <Watermark>www.wooyun.org</Watermark>
    </Screen>
  );
}
